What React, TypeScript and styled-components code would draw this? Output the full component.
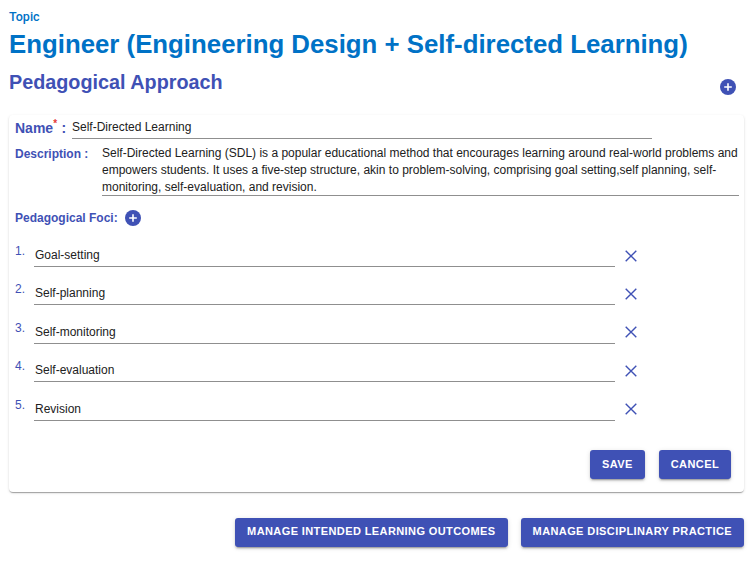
import { FC } from 'react';
import styled, { createGlobalStyle } from 'styled-components';

const GlobalStyle = createGlobalStyle`
    html, body {
        margin: 0;
        padding: 0;
        background: #ffffff;
        font-family: "Liberation Sans", Arial, sans-serif;
    }
`;

const Page = styled('div')`
    width: 756px;
    height: 562px;
    box-sizing: border-box;
    padding: 10px 12px 0 9px;
    overflow: hidden;
`;

const Eyebrow = styled('div')`
    font-family: Roboto, sans-serif;
    font-size: 12.5px;
    line-height: 14px;
    font-weight: 500;
    color: #0072c6;
`;

const Title = styled('h1')`
    margin: 3px 0 0;
    font-size: 25.8px;
    line-height: 34px;
    font-weight: 700;
    white-space: nowrap;
    color: #0072c6;
`;

const SectionRow = styled('div')`
    display: flex;
    justify-content: space-between;
    height: 46px;
    margin-top: 8px;
`;

const SectionTitle = styled('h2')`
    margin: 0;
    font-size: 19.8px;
    line-height: 26px;
    font-weight: 700;
    color: #3f51b5;
`;

const IconButton = styled('button')<{ $top?: number; $right?: number; $left?: number }>`
    display: flex;
    padding: 0;
    border: 0;
    background: none;
    color: #3f51b5;
    cursor: pointer;
    margin-top: ${(p) => p.$top ?? 0}px;
    margin-right: ${(p) => p.$right ?? 0}px;
    margin-left: ${(p) => p.$left ?? 0}px;
`;

const Card = styled('section')`
    height: 377px;
    box-sizing: border-box;
    padding: 3px 6px 0;
    background: #fff;
    border-radius: 4px;
    box-shadow: 0 2px 1px -1px rgba(0, 0, 0, 0.2), 0 1px 1px rgba(0, 0, 0, 0.14), 0 1px 3px rgba(0, 0, 0, 0.12);
    display: flex;
    flex-direction: column;
`;

const NameRow = styled('div')`
    display: flex;
    align-items: flex-start;
`;

const NameLabel = styled('label')`
    width: 57px;
    font-size: 14px;
    line-height: 20px;
    font-weight: 700;
    color: #3f51b5;
    white-space: nowrap;
`;

const Star = styled('sup')`
    color: #e53935;
    font-size: 10px;
    line-height: 0;
    margin-right: 0.5px;
`;

const NameInput = styled('div')`
    width: 580px;
    height: 20px;
    border-bottom: 1px solid #8f8f8f;
    font-size: 12px;
    line-height: 19px;
    color: #212121;
`;

const DescriptionRow = styled('div')`
    display: flex;
    margin-top: 6px;
`;

const FieldLabel = styled('label')`
    width: 87px;
    flex-shrink: 0;
    padding-top: 1px;
    font-size: 12px;
    line-height: 17px;
    font-weight: 700;
    color: #3f51b5;
`;

const DescriptionText = styled('div')`
    flex: 1;
    height: 50px;
    margin-right: -1px;
    border-bottom: 1px solid #8f8f8f;
    font-size: 12px;
    line-height: 17px;
    color: #212121;
`;

const FociHeader = styled('div')`
    display: flex;
    align-items: center;
    gap: 7px;
    margin-top: 13px;
    height: 18px;
`;

const FociLabel = styled('span')`
    font-size: 12px;
    font-weight: 700;
    color: #3f51b5;
`;

const FociList = styled('ol')`
    list-style: none;
    margin: 12px 0 0;
    padding: 0;
`;

const FociItem = styled('li')`
    display: flex;
    height: 38.4px;
`;

const FociNumber = styled('span')`
    width: 19px;
    padding-top: 5px;
    font-size: 12px;
    line-height: 14px;
    color: #3f51b5;
`;

const FociInput = styled('div')`
    width: 581px;
    height: 28px;
    box-sizing: border-box;
    padding-top: 8px;
    padding-left: 1px;
    border-bottom: 1px solid #8f8f8f;
    font-size: 12px;
    line-height: 16px;
    color: #212121;
`;

const CardActions = styled('div')`
    display: flex;
    justify-content: flex-end;
    gap: 14px;
    margin-top: 19px;
    padding-right: 7px;
`;

const Button = styled('button')`
    height: 29px;
    padding: 0 12px;
    border: 0;
    border-radius: 3px;
    background: #3f51b5;
    color: #fff;
    font-family: "Liberation Sans", Arial, sans-serif;
    font-size: 11px;
    font-weight: 700;
    letter-spacing: 0.4px;
    text-transform: uppercase;
    white-space: nowrap;
    box-shadow: 0 3px 1px -2px rgba(0, 0, 0, 0.2), 0 2px 2px rgba(0, 0, 0, 0.14), 0 1px 5px rgba(0, 0, 0, 0.12);
    cursor: pointer;
`;

const PageButton = styled(Button)`
    padding-bottom: 3px;
`;

const PageActions = styled('div')`
    display: flex;
    justify-content: flex-end;
    gap: 13px;
    margin-top: 26px;
`;

const PlusIcon: FC = () => (
    <svg width="16" height="16" viewBox="0 0 16 16" aria-hidden="true">
        <circle cx="8" cy="8" r="8" fill="currentColor" />
        <path d="M8 4.2v7.6M4.2 8h7.6" stroke="#fff" strokeWidth="1.6" />
    </svg>
);

const CloseIcon: FC = () => (
    <svg width="12" height="12" viewBox="0 0 12 12" aria-hidden="true">
        <path d="M.7.7l10.6 10.6M11.3.7.7 11.3" stroke="currentColor" strokeWidth="1.4" fill="none" />
    </svg>
);

const foci = ['Goal-setting', 'Self-planning', 'Self-monitoring', 'Self-evaluation', 'Revision'];

const App: FC = () => (
    <Page>
        <GlobalStyle />
        <Eyebrow>Topic</Eyebrow>
        <Title>Engineer (Engineering Design + Self-directed Learning)</Title>
        <SectionRow>
            <SectionTitle>Pedagogical Approach</SectionTitle>
            <IconButton $top={10} $right={8}><PlusIcon /></IconButton>
        </SectionRow>
        <Card>
            <NameRow>
                <NameLabel>Name<Star>*</Star> :</NameLabel>
                <NameInput>Self-Directed Learning</NameInput>
            </NameRow>
            <DescriptionRow>
                <FieldLabel>Description :</FieldLabel>
                <DescriptionText>
                    Self-Directed Learning (SDL) is a popular educational method that encourages learning around real-world problems and empowers students. It uses a five-step structure, akin to problem-solving, comprising goal setting,self planning, self-monitoring, self-evaluation, and revision.
                </DescriptionText>
            </DescriptionRow>
            <FociHeader>
                <FociLabel>Pedagogical Foci:</FociLabel>
                <IconButton><PlusIcon /></IconButton>
            </FociHeader>
            <FociList>
                {foci.map((item, i) => (
                    <FociItem key={item}>
                        <FociNumber>{i + 1}.</FociNumber>
                        <FociInput>{item}</FociInput>
                        <IconButton $top={10.7} $left={10}>
                            <CloseIcon />
                        </IconButton>
                    </FociItem>
                ))}
            </FociList>
            <CardActions>
                <Button>Save</Button>
                <Button>Cancel</Button>
            </CardActions>
        </Card>
        <PageActions>
            <PageButton>Manage Intended Learning Outcomes</PageButton>
            <PageButton>Manage Disciplinary Practice</PageButton>
        </PageActions>
    </Page>
);

export default App;
